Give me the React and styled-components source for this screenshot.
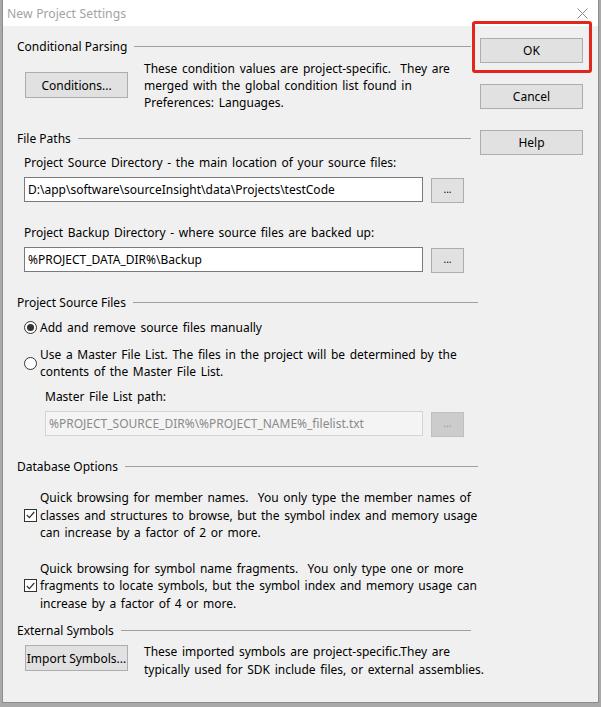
import styled, { createGlobalStyle } from "styled-components";

const GlobalStyle = createGlobalStyle`
  html, body {
    margin: 0;
    padding: 0;
    background: #a9a9a9;
  }
  body {
    font-family: "Noto Sans", "Open Sans", sans-serif;
    font-size: 12px;
    color: #000;
  }
`;

const Window = styled.div`
  position: relative;
  margin-left: 2px;
  width: 597px;
  height: 703px;
  box-sizing: border-box;
  border: 1px solid #8c8c8c;
  border-top: none;
  background: #f0f0f0;
  display: flex;
  flex-direction: column;
`;

const TitleBar = styled.div`
  height: 26px;
  flex: none;
  background: #fff;
  display: flex;
  align-items: center;
  justify-content: space-between;
  padding: 0 10px 0 4px;
  color: #a3a3a3;
  font-size: 12.2px;
  word-spacing: 0.5px;
`;

const Body = styled.div`
  display: grid;
  grid-template-columns: 461px 103px;
  column-gap: 2px;
  padding: 12px 0 0 14px;
`;

const LeftCol = styled.div`
  display: flex;
  flex-direction: column;
`;

const RightCol = styled.div`
  display: flex;
  flex-direction: column;
  gap: 21px;
`;

const GroupHeader = styled.div`
  display: flex;
  align-items: center;
  line-height: 17px;
  margin-top: ${(p) => p.$gap || 0}px;
  margin-right: ${(p) => (p.$narrow ? 7 : 0)}px;

  &::after {
    content: "";
    flex: 1;
    margin-left: 7px;
    border-top: 1px solid #a0a0a0;
  }
`;

const Indent = styled.div`
  padding-left: ${(p) => p.$pad || 8}px;
  margin-top: ${(p) => p.$gap || 0}px;
`;

const Text = styled.div`
  line-height: ${(p) => p.$lh || 17}px;
  white-space: pre;
  word-spacing: 1.5px;
`;

const Row = styled.div`
  display: flex;
  align-items: flex-start;
  gap: 16px;
  padding-left: 8px;
  margin-top: ${(p) => p.$gap || 0}px;
`;

const Button = styled.button`
  width: 103px;
  height: ${(p) => p.$h || 26}px;
  flex: none;
  padding: 0;
  margin-top: ${(p) => p.$top || 0}px;
  border: 1px solid #adadad;
  background: #e1e1e1;
  font: inherit;
  color: #000;
  white-space: nowrap;
  overflow: visible;
`;

const FieldRow = styled.div`
  display: flex;
  align-items: flex-start;
  gap: 8px;
  height: 25px;
  margin-top: 6px;
`;

const Field = styled.div`
  width: ${(p) => p.$w}px;
  height: 25px;
  flex: none;
  box-sizing: border-box;
  border: 1px solid ${(p) => (p.$disabled ? "#d4d4d4" : "#7a7a7a")};
  background: ${(p) => (p.$disabled ? "#f4f4f4" : "#fff")};
  color: ${(p) => (p.$disabled ? "#8a8a8a" : "#000")};
  padding-left: 3px;
  display: flex;
  align-items: center;
  white-space: nowrap;
  overflow: hidden;
`;

const Browse = styled.div`
  width: 33px;
  height: 25px;
  flex: none;
  margin-top: 1px;
  box-sizing: border-box;
  border: 1px solid ${(p) => (p.$disabled ? "#bfbfbf" : "#adadad")};
  background: ${(p) => (p.$disabled ? "#cccccc" : "#e1e1e1")};
  color: ${(p) => (p.$disabled ? "#999" : "#000")};
  display: flex;
  align-items: center;
  justify-content: center;
  font-size: 10px;
  padding-bottom: 3px;
`;

const Option = styled.div`
  display: flex;
  align-items: center;
  gap: 3px;
  padding-left: 7px;
  margin-top: ${(p) => p.$gap || 0}px;
`;

const Radio = styled.span`
  width: 13px;
  height: 13px;
  box-sizing: border-box;
  border: 1px solid #333;
  border-radius: 50%;
  background: #fff;
  flex: none;
  display: flex;
  align-items: center;
  justify-content: center;

  &::after {
    content: "";
    width: 7px;
    height: 7px;
    border-radius: 50%;
    background: ${(p) => (p.$on ? "#333" : "transparent")};
  }
`;

const Check = styled.span`
  width: 13px;
  height: 13px;
  box-sizing: border-box;
  border: 1px solid #333;
  background: #fff;
  flex: none;
  display: flex;
  align-items: center;
  justify-content: center;
`;

const OkWrap = styled.div`
  position: relative;
`;

const Highlight = styled.div`
  position: absolute;
  inset: -17px -9px -10px -8px;
  border: 3px solid #e3261d;
  border-radius: 3px;
  pointer-events: none;
`;

const CheckMark = () => (
  <svg width="9" height="8" viewBox="0 0 9 8">
    <path d="M0.8 4 L3.4 6.6 L8.2 1" fill="none" stroke="#333" strokeWidth="1.2" />
  </svg>
);

export default function App() {
  return (
    <>
      <GlobalStyle />
      <Window>
        <TitleBar>
          <span>New Project Settings</span>
          <svg width="11" height="11" viewBox="0 0 11 11">
            <path d="M0.5 0.5 L10.5 10.5 M10.5 0.5 L0.5 10.5" stroke="#8a8a8a" strokeWidth="1" />
          </svg>
        </TitleBar>
        <Body>
          <LeftCol>
            <GroupHeader $narrow>Conditional Parsing</GroupHeader>
            <Row $gap={5}>
              <Button $top={12}>Conditions...</Button>
              <Text>{"These condition values are project-specific.  They are\nmerged with the global condition list found in\nPreferences: Languages."}</Text>
            </Row>

            <GroupHeader $narrow $gap={19}>File Paths</GroupHeader>
            <Indent $gap={7} $pad={7}>
              <Text>Project Source Directory - the main location of your source files:</Text>
              <FieldRow>
                <Field $w={399}>D:\app\software\sourceInsight\data\Projects\testCode</Field>
                <Browse>...</Browse>
              </FieldRow>
            </Indent>
            <Indent $gap={22} $pad={7}>
              <Text>Project Backup Directory - where source files are backed up:</Text>
              <FieldRow>
                <Field $w={399}>%PROJECT_DATA_DIR%\Backup</Field>
                <Browse>...</Browse>
              </FieldRow>
            </Indent>

            <GroupHeader $gap={22}>Project Source Files</GroupHeader>
            <Option $gap={8}>
              <Radio $on />
              <Text>Add and remove source files manually</Text>
            </Option>
            <Option $gap={10}>
              <Radio />
              <Text>{"Use a Master File List. The files in the project will be determined by the\ncontents of the Master File List."}</Text>
            </Option>
            <Indent $gap={8} $pad={28}>
              <Text>Master File List path:</Text>
              <FieldRow>
                <Field $w={378} $disabled>%PROJECT_SOURCE_DIR%\%PROJECT_NAME%_filelist.txt</Field>
                <Browse $disabled>...</Browse>
              </FieldRow>
            </Indent>

            <GroupHeader $gap={22}>Database Options</GroupHeader>
            <Option $gap={14}>
              <Check><CheckMark /></Check>
              <Text $lh={17.5}>{"Quick browsing for member names.  You only type the member names of\nclasses and structures to browse, but the symbol index and memory usage\ncan increase by a factor of 2 or more."}</Text>
            </Option>
            <Option $gap={18}>
              <Check><CheckMark /></Check>
              <Text $lh={17.5}>{"Quick browsing for symbol name fragments.  You only type one or more\nfragments to locate symbols, but the symbol index and memory usage can\nincrease by a factor of 4 or more."}</Text>
            </Option>

            <GroupHeader $narrow $gap={10}>External Symbols</GroupHeader>
            <Row $gap={4}>
              <Button $top={2}>Import Symbols...</Button>
              <Text $lh={17.5}>{"These imported symbols are project-specific.They are\ntypically used for SDK include files, or external assemblies."}</Text>
            </Row>
          </LeftCol>

          <RightCol>
            <OkWrap>
              <Button $h={25}>OK</Button>
              <Highlight />
            </OkWrap>
            <Button $h={25}>Cancel</Button>
            <Button $h={25}>Help</Button>
          </RightCol>
        </Body>
      </Window>
    </>
  );
}
